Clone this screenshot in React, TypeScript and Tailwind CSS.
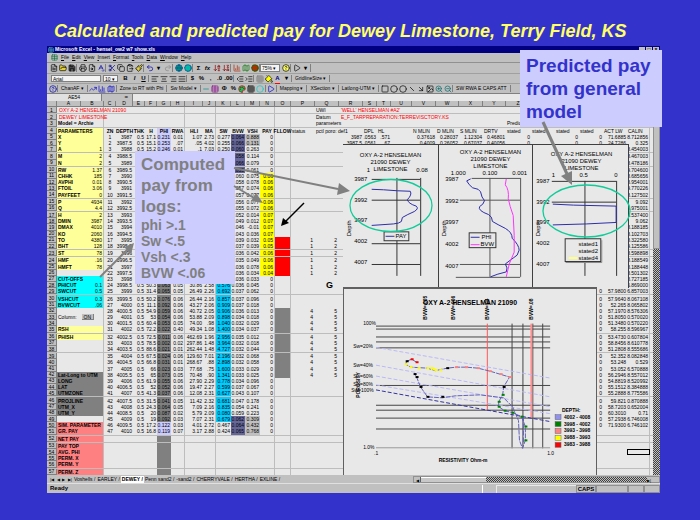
import type { ReactNode } from 'react'
import {
  AlignCenter, AlignJustify, AlignLeft, AlignRight, ArrowDownAZ, ArrowDownZA, ArrowDownRight, BarChart3,
  Circle, ClipboardPaste, Copy, FileText, FolderOpen, Globe, Grid3x3, HelpCircle, Image, Indent, Map as MapIcon,
  Minus, Outdent, Paintbrush, PaintBucket, Palette, Printer, Redo2, Save, Scissors, SpellCheck,
  Square, Table, TrendingUp, Undo2, ZoomIn, ZoomOut, Earth, Play, FileSearch,
} from 'lucide-react'

type Col = { id: string; w: string }

const COLS: Col[] = [
  { id: 'A', w: 'w-[24px]' }, { id: 'B', w: 'w-[23px]' }, { id: 'C', w: 'w-[12px]' }, { id: 'D', w: 'w-[17px]' },
  { id: 'E', w: 'w-[12px]' }, { id: 'F', w: 'w-[12px]' }, { id: 'G', w: 'w-[14px]' }, { id: 'H', w: 'w-[14px]' },
  { id: 'I', w: 'w-[18px]' }, { id: 'J', w: 'w-[13px]' }, { id: 'K', w: 'w-[15px]' }, { id: 'L', w: 'w-[14px]' },
  { id: 'M', w: 'w-[15px]' }, { id: 'N', w: 'w-[15px]' }, { id: 'O', w: 'w-[16px]' }, { id: 'P', w: 'w-[24px]' },
  { id: 'Q', w: 'w-[24px]' }, { id: 'R', w: 'w-[24px]' }, { id: 'S', w: 'w-[14px]' }, { id: 'T', w: 'w-[14px]' },
  { id: 'U', w: 'w-[21px]' }, { id: 'V', w: 'w-[24px]' }, { id: 'W', w: 'w-[23px]' }, { id: 'X', w: 'w-[24px]' },
  { id: 'Y', w: 'w-[23px]' }, { id: 'Z', w: 'w-[25px]' }, { id: 'AA', w: 'w-[24px]' }, { id: 'AB', w: 'w-[24px]' },
  { id: 'AC', w: 'w-[24px]' }, { id: 'AD', w: 'w-[24px]' }, { id: 'AE', w: 'w-[23px]' }, { id: 'AF', w: 'flex-1' },
]

const ROWS = Array.from({ length: 57 }, (_, i) => i + 1)
const RULED = [1, 3, 7, 9, 14, 16, 22, 23, 29, 35, 38, 45, 51, 52, 56]
const LINED = ['H', 'J', 'N', 'O', 'B', 'AE']

const cells: Record<string, string> = {}
const put = (col: string, from: number, list: string) => {
  list.split(' ').forEach((v, i) => {
    if (v !== '_') cells[col + (from + i)] = v
  })
}

const labels = [
  'OXY A-2 HENSELMAN 21090', 'DEWEY LIMESTONE', 'Model = Archie', 'PARAMETERS', 'X', 'Y', 'A', 'M', 'N', 'RW',
  'CHHK', 'AVPHI', 'FTOIL', 'PAYFEET', 'P', 'Q', 'H', 'DMIN', 'DMAX', 'KO', 'TO', 'BHT', 'ST', 'HMF', 'HMFT', '',
  'CUT-OFFS', 'PHICUT', 'SWCUT', 'VSHCUT', 'BVWCUT', '', 'Column:', '', 'RSH', 'PHISH', '', '', '', '', '',
  'Lat-Long to UTM', 'LONG', 'LAT', 'UTMZONE', 'PROJLINE', 'UTM_X', 'UTM_Y', '', 'SIM. PARAMETER', 'GR. PAY',
  'NET PAY', 'PAY TOP', 'AVG. PHI', 'PERM. X', 'PERM. Y', 'PERM. Z',
]
labels.forEach((v, i) => (cells['A' + (i + 1)] = v))

put('B', 7, '1 2 2 1.37 185 0.01 3.06 0 4934 4.4 2 3987 4010 2060 4380 128 78 .16 78')
put('B', 28, '0.1 0.5 0.3 .06')

// well log, one sample every half foot
for (let i = 0; i < 47; i++) {
  const r = 5 + i
  cells['C' + r] = String(i + 1)
  cells['D' + r] = String(3987 + i * 0.5)
  cells['E' + r] = '0.5'
  cells['N' + r] = '0'
}
put('F', 5, '17.1 15.1 15.2')
put('F', 28, '50.3 31.4 50.2 11.1 54.9 53 60.4 72.2 72.5 78.5 88.6 67.5 66.8 66 65 61.9 52 41.3 31.5 24.3 20 19 17.2 16.8')
put('G', 5, '0.231 0.253 0.246')
put('G', 28, '0.063 0.065 0.076 0.092 0.059 0.054 0.053 0.022 0.011 0.002 0.021 0.024 0.031 0.023 0.073 0.055 0.052 0.037 0.041 0.064 0.087 0.092 0.122 0.119')
put('H', 5, '0.01 .07 0.01')
put('H', 28, '0.05 0.05 0.06 0.06 0.06 0.06 0.05 0.40 0.06 0.02 0.01 0.06 0.01 0.03 0.05 0.06 0.06 0.06 0.05 0.05 0.02 0.03 0.03 0.07')
put('I', 5, '1.07 .05 .1')
put('I', 28, '30.86 26.49 26.44 43.27 40.72 53.88 74.00 49.34 462.69 297.86 262.44 129.60 268.67 77.68 70.48 27.90 19.47 12.08 11.42 7.09 5.79 7.07 4.01 3.17')
put('J', 5, '2.73 4.02 7.03')
put('J', 28, '2.58 2.26 2.16 2.06 2.05 2.09 .98 1.08 1.96 1.48 1.48 7.01 .88 .75 .90 2.29 2.27 2.31 2.32 2.16 2.09 2.31 2.72 2.88')
put('K', 5, '0.277 0.255 0.250')
put('K', 28, '0.576 0.692 0.857 0.909 0.906 0.898 1.040 1.400 2.956 3.964 4.727 2.196 2.898 1.600 1.341 0.778 0.599 0.627 0.681 0.835 0.080 0.679 0.467 0.424')
put('L', 5, '0.064 0.066 0.060 0.058 0.066 0.055 0.060 0.058 0.057 0.057 0.056 0.055 0.052 0.049 0.046 0.043 0.039 0.037 0.036 0.035 0.036 0.036 0.036 0.036 0.037 0.037 0.037 0.036 0.034 0.032 0.034 0.035 0.032 0.032 0.032 0.032 0.033 0.033 0.034 0.037 0.043 0.047 0.054 0.059 0.062 0.064 0.065')
put('M', 5, '0.888 0.131 0.263 0.114 0.079 0.061 0.075 0.078 0.074 0.077 0.077 0.072 0.014 0.012 -0.01 0.036 0.032 0.039 0.042 0.049 0.078 0.034 0.033 0.045 0.062 0.096 0.018 0.013 0.018 0.029 0.037 0.012 0.018 0.044 0.068 0.058 0.029 0.025 0.096 0.067 0.107 0.178 0.241 0.223 0.309 0.432 0.768')
put('N', 11, '0.06 0.06 0.06 0.06 0.06 0.06 0.07 0.07 0.07 0.07 0.05 0.05 0.06 0.06 0.06 0.04')
put('P', 21, '1 1 1 1 1 1')
put('Q', 21, '2 2 2 2 2 2')
put('P', 32, '4 4 4 4 4 4 4 4 4 4 4')
put('Q', 32, '5 5 5 5 5 5 5 5 5 5 5')
put('R', 5, '3987 3987.5')
put('S', 5, '.0563 .0561')
put('T', 5, '.571 .67')
put('V', 5, '0.37618 0.4009')
put('W', 5, '0.28037 0.26052')
put('X', 5, '1.12304 0.67037')
put('Y', 5, '0.46801 0.40056')
put('Z', 5, '0 0')
put('AB', 5, '0 0')
put('AC', 5, '0 0')
put('AD', 5, '71.6885 24.7286')
put('AE', 5, '8.712856 0.325 8.454003 8.467003 8.478186 9.704600 8.685656 8.954001 9.770226 8.127502 9.092 8.975001 8.537400 9.062 8.188185 8.102703 8.322580 9.125586 8.598898 8.188549 8.188448 8.501302 8.727185 8.420206')
put('AC', 28, '0 0 0 0 0 0 0 0 0 0 0 0 0 0 0 0 0 0 0 0 0 0 0')
put('AD', 28, '55.5940 57.9800 57.9640 52.265 57.1970 51.8050 51.3480 58.255 53.4730 58.8456 51.2808 52.352 53.248 53.052 56.2946 54.8819 55.1512 55.2888 59.821 58.7203 60.3010 57.2938 71.9300')
put('AE', 28, '6.869000 6.857003 8.067108 8.065802 8.576306 0.570020 0.570220 8.596967 0.607804 8.610778 8.555686 8.082848 0.529 6.570888 8.557012 8.520992 8.384888 8.775586 0.870888 0.652004 0.71 6.746008 6.746102')

Object.assign(cells, {
  C4: 'ZN', D4: 'DEPTH', E4: 'THK', F4: 'H', G4: 'PHI', H4: 'RWA', I4: 'HLI', J4: 'MA', K4: 'SW', L4: 'BVW', M4: 'VSH',
  N4: 'PAY', O4: 'FLLOW', P4: 'status', Q4: 'pctl poro: def1', S4: 'DPL', T4: 'HL', V4: 'N MLIN', W4: 'D MLIN',
  X4: 'S MLIN', Y4: 'DRTV', Z4: 'stated', AA4: 'stated', AB4: 'stated', AC4: 'stated', AD4: 'ACT LW', AE4: 'CALIN',
  Q1: 'UWI', R1: "'WELL'  HENSELMAN #A2'", Q2: 'Datum', R2: 'E_F_TARPREPARATION:TERREVISCTORY.KS',
  Q3: 'parameters', Z3: 'Predicted', Q28: 'G',
})

const within = (n: number, a: number, b: number) => n >= a && n <= b

function fillFor(col: string, r: number) {
  if (col === 'A' || col === 'B') {
    if (within(r, 4, 25) || within(r, 35, 36)) return 'bg-[#ffff99]'
    if (within(r, 27, 31)) return 'bg-[#00ffff]'
    if (within(r, 42, 48)) return 'bg-[#808080]'
    if (r >= 50) return 'bg-[#ff8080]'
  }
  if (col === 'G') {
    if (within(r, 4, 27) || within(r, 50, 51)) return 'bg-[#ccccff]'
    if (r >= 28) return 'bg-[#808080]'
  }
  if (col === 'K' && within(r, 28, 49)) return 'bg-[#00ccff]'
  if (col === 'L' && (within(r, 5, 10) || within(r, 49, 51))) return 'bg-[#666699]'
  if (col === 'M' && (within(r, 5, 6) || within(r, 49, 51))) return 'bg-[#c0c0c0]'
  if (col === 'N' && within(r, 11, 26)) return 'bg-[#ffff00]'
  if (col === 'O' && within(r, 21, 26)) return 'bg-[#ff0000]'
  if (col === 'O' && within(r, 32, 42)) return 'bg-[#808080]'
  return ''
}

function textFor(col: string, r: number) {
  if (r < 3 && (col === 'A' || col === 'R')) return 'relative text-[#ff0000] pl-[2px]'
  if (col === 'A') return r > 2 && r !== 33 ? 'relative font-bold pl-px' : 'relative pl-px'
  if (r === 4 && col === 'D') return 'font-bold justify-end'
  if (r === 4) return within(COLS.findIndex((c) => c.id === col), 2, 14) ? 'font-bold justify-center' : 'pl-px'
  if (r < 4) return 'pl-px'
  if (col === 'C') return 'justify-center'
  if (r === 28 && col === 'Q') return 'relative justify-end pr-[6px] text-[9px] font-bold'
  if (col === 'P' || col === 'Q') return 'justify-end pr-[2px]'
  return 'justify-end pr-px'
}

function Sheet() {
  return (
    <table className="flex flex-1 flex-col overflow-hidden bg-[#e8e8e8] text-[5px] leading-[6px]">
      <thead className="flex">
        <tr className="flex h-[6px] flex-1 border-b border-[#808080] bg-[#c0c0c0]">
          <th className="w-[10px] border-r border-[#808080]" />
          {COLS.map((c) => (
            <th key={c.id} className={`${c.w} shrink-0 overflow-hidden border-r border-[#808080] text-center font-normal leading-[5px]`}>
              {c.id === 'AF' ? '' : c.id}
            </th>
          ))}
        </tr>
      </thead>
      <tbody className="flex flex-1 flex-col">
        {ROWS.map((r) => (
          <tr key={r} className={`flex min-h-[6px] flex-1 basis-0 ${RULED.includes(r) ? 'border-b border-[#bdbdbd]' : ''}`}>
            <th className="flex h-full w-[10px] shrink-0 items-center justify-center border-b border-r border-[#808080] bg-[#c0c0c0] font-normal">
              {r}
            </th>
            {COLS.map((c) => (
              <td
                key={c.id}
                className={`flex h-full shrink-0 items-center whitespace-nowrap ${c.w} ${LINED.includes(c.id) ? 'border-r border-[#bdbdbd]' : ''} ${fillFor(c.id, r)} ${textFor(c.id, r)} ${r === 54 && c.id === 'AE' ? 'border border-black' : ''}`}
              >
                {r === 33 && c.id === 'B' ? (
                  <button className="mr-2 h-full border-b border-r border-[#808080] bg-[#c0c0c0] px-[2px]">ON</button>
                ) : (
                  cells[c.id + r]
                )}
              </td>
            ))}
          </tr>
        ))}
      </tbody>
    </table>
  )
}

function LogLabels({ x, top, step }: { x: number; top: number; step: number }) {
  return (
    <>
      {[3987, 3992, 3997, 4002, 4007].map((d, i) => (
        <text key={d} x={x} y={top + i * step} textAnchor="middle">{d}</text>
      ))}
    </>
  )
}

function ChartTitle({ x, y }: { x: number; y: number }) {
  return (
    <g textAnchor="middle">
      <text x={x} y={y}>OXY A-2 HENSELMAN</text>
      <text x={x} y={y + 7}>21090 DEWEY</text>
      <text x={x} y={y + 14}>LIMESTONE</text>
    </g>
  )
}

function PayChart() {
  return (
    <svg viewBox="343 144 96 144" className="h-[144px] w-[96px] border-r border-t border-[#404040] bg-[#e8e8e8] text-[6px]">
      <ChartTitle x={391} y={156} />
      <text x="367" y="171">1</text>
      <text x="417" y="171">0.08</text>
      <LogLabels x={361} top={180} step={21} />
      <text transform="translate(351 236) rotate(-90)">Depth</text>
      <path d="M372 178.500H421M372 199.500H421M372 243.500H421M372 264.500H421M397.500 177V276M421.500 177V276" stroke="#333" fill="none" />
      <path d="M372 188.500L384 189L398 190L411 190.500Q413 194 408 199Q409 203 417 205.500Q420 208 415 211Q408 214 403 217L402 221Q400 223 394 223.500L372 225" stroke="#2c2ca8" fill="none" />
      <rect x="384.500" y="231.500" width="25" height="9" fill="#e8e8e8" stroke="#333" />
      <path d="M386 236H395" stroke="#2c2ca8" />
      <text x="396" y="238">PAY</text>
    </svg>
  )
}

function PorosityChart() {
  return (
    <svg viewBox="439 144 94 144" className="h-[144px] w-[94px] border-r border-t border-[#404040] bg-[#e8e8e8] text-[6px]">
      <ChartTitle x={491} y={153} />
      <text x="451" y="174">1.000</text>
      <text x="483" y="174">0.100</text>
      <text x="513" y="174">0.001</text>
      <LogLabels x={452} top={180} step={22} />
      <text transform="translate(446 236) rotate(-90)">Depth</text>
      <path d="M472 177.500H521M460 199.500H521M460 264.500H521M456 277.500H521M490.500 177V277M521.500 177V277" stroke="#555" fill="none" />
      <path d="M471 178L467 180Q469 184 473 187Q480 188 481 191Q482 197 485 200Q484 204 480 206Q478 210 489 214Q493 216 493 221Q498 224 506 228Q513 232 513 238Q520 245 520 250Q519 256 514 258L506 264Q509 268 507 272Q498 274 491 277" stroke="#2c2ca8" fill="none" />
      <path d="M507 178L506 184Q510 189 509 198L511 206L514 215L515 235L515 252L510 264L507 277" stroke="#ff33ff" fill="none" />
      <rect x="469.500" y="232.500" width="27" height="15" fill="#e8e8e8" stroke="#333" />
      <path d="M471 237H480" stroke="#2c2ca8" />
      <path d="M471 244.500H480" stroke="#ff33ff" />
      <text x="482" y="239">PHI</text>
      <text x="481" y="246">BVW</text>
    </svg>
  )
}

function StatedChart() {
  return (
    <svg viewBox="533 144 96 144" className="h-[144px] w-[96px] border-r border-t border-[#404040] bg-[#e8e8e8] text-[6px]">
      <ChartTitle x={582} y={155} />
      <text x="552" y="176">1</text>
      <text x="580" y="176">0.5</text>
      <text x="615" y="176">0</text>
      <LogLabels x={543} top={182} step={21} />
      <text transform="translate(540 236) rotate(-90)">Depth</text>
      <path d="M552 180.500H617M552 201.500H617M585.500 180V276M617.500 180V276" stroke="#333" fill="none" />
      <path d="M553 203.500L574 204.500L617 205.500V222L587 223.500L553 224.500" stroke="#2c2ca8" fill="none" />
      <rect x="565.500" y="238.500" width="36" height="23" fill="#e8e8e8" stroke="#333" />
      <path d="M566 262.500H602.500V240" stroke="#888" fill="none" />
      <path d="M569 258H578" stroke="#ffff80" strokeWidth="2" />
      <text x="579" y="246">stated1</text>
      <text x="579" y="253">stated2</text>
      <text x="579" y="260">stated4</text>
    </svg>
  )
}

const POINTS: [string, number[][]][] = [
  ['#000', [[406, 360], [447, 367], [504, 386], [442, 396], [427, 396], [420, 386], [416, 376], [414, 373]]],
  ['#ff0000', [[411, 358], [416, 361]]],
  ['#ffff00', [[405, 363], [410, 366], [418, 367], [427, 367], [431, 367], [433, 368], [435, 369], [440, 369]]],
  ['#ff8080', [[456, 366], [466, 366], [478, 367], [490, 370], [501, 373], [510, 376]]],
  ['#008000', [[503, 394], [499, 401], [499, 406], [505, 410], [513, 412], [522, 416], [526, 426], [526, 440]]],
]

const DEPTHS = [
  ['#9090f0', '4002 - 4008'],
  ['#008000', '3998 - 4002'],
  ['#ff8080', '3993 - 3998'],
  ['#ffff00', '3988 - 3993'],
  ['#ff0000', '3983 - 3988'],
]

function PickettPlot() {
  return (
    <svg viewBox="343 287 254 188" className="h-[188px] w-[254px] border-l border-r border-t-2 border-[#606060] bg-[#e8e8e8] text-[5px]">
      {[425, 453, 487, 532].map((x, i) => (
        <text key={x} transform={`translate(${x + 2} 318) rotate(-90)`} className="font-bold">
          {['BVW=.005', 'BVW=.006', 'BVW=.04', 'BVW=.08'][i]}
        </text>
      ))}
      <text x="470" y="303" textAnchor="middle" className="text-[7px] font-bold">OXY A-2 HENSELMAN 21090</text>
      <path d="M375 324.500H551M375 327.500H551M375 335.500H551M375 340.500H551M375 346.500H551M375 384.500H551M375 404.500H551M375 409.500H551M375 417.500H551M375 428.500H551" stroke="#444" />
      <path d="M512.500 322V448M523.500 322V448M533.500 322V448M543.500 322V448" stroke="#444" />
      <path d="M375 447.500H551" stroke="#999" />
      <path d="M487.500 322V409" stroke="#ff5555" />
      <path d="M532 322V417" stroke="#ff9090" strokeWidth="2" />
      <path d="M375 346L551 377M375 364L551 396M375 375L551 406M375 384L551 413" stroke="#b8b8f8" strokeDasharray="4 2" />
      <path d="M375 389L551 421" stroke="#3030a0" strokeDasharray="4 2" />
      <path
        d="M416 361L411 358L406 360L405 363L410 366L427 367L435 369.500L447 367L456 366L466 366L478 367L490 370L510 376L504 386L503 394L499 401V406L505 410L513 412L522 416L526 426V440L523 448L520 440L519 420L513 406L504 397L480 394L455 395L442 397L427 396L420 386L416 376L414 373"
        stroke="#6060b8" strokeDasharray="5 1" fill="none"
      />
      <path d="M524 416V444" stroke="#6060c0" strokeDasharray="5 2" />
      {POINTS.map(([color, list]) =>
        list.map(([x, y]) => <rect key={`${x}-${y}`} x={x - 1} y={y - 1} width="3" height="2" fill={color} />)
      )}
      <text x="362" y="323">100%</text>
      <text x="352" y="347">Sw=20%</text>
      <text x="352" y="366">Sw=40%</text>
      <text x="352" y="377">Sw=60%</text>
      <text x="352" y="385">Sw=80%</text>
      <text x="350" y="391">Sw=100%</text>
      <text transform="translate(359 397) rotate(-90)" className="font-bold">POROSITY</text>
      <text x="362" y="449">1.0%</text>
      <text x="373" y="455">.1</text>
      <text x="548" y="455">1.0</text>
      <text x="463" y="462" textAnchor="middle" className="font-bold">RESISTIVITY Ohm-m</text>
      <text x="563" y="411" className="font-bold">DEPTH:</text>
      {DEPTHS.map(([color, label], i) => (
        <g key={label}>
          <rect x="556" y={414 + i * 7} width="6" height="5" fill={color} stroke="#666" strokeWidth="0.500" />
          <text x="565" y={418 + i * 7} className="font-bold">{label}</text>
        </g>
      ))}
    </svg>
  )
}

function Tool({ children, label }: { children: ReactNode; label: string }) {
  return (
    <button aria-label={label} className="flex w-[9px] items-center justify-center text-[6px] font-bold [&>svg]:size-[8px] [&>svg]:stroke-2">
      {children}
    </button>
  )
}

function Group({ children }: { children: ReactNode }) {
  return <div className="flex items-center border-r border-[#808080] pl-px">{children}</div>
}

function TextTool({ children }: { children: ReactNode }) {
  return <button className="border-r border-[#808080] px-[3px] text-[5px]">{children}</button>
}

function Toolbars() {
  return (
    <div className="text-[6px]">
      <nav className="flex h-[10px] items-center gap-[3px] border-b border-[#909090] pl-1 text-[5px]">
        <Table className="size-[7px] text-[#006633]" />
        {['File', 'Edit', 'View', 'Insert', 'Format', 'Tools', 'Data', 'Window', 'Help'].map((m) => (
          <button key={m}><span className="underline">{m[0]}</span>{m.slice(1)}</button>
        ))}
      </nav>
      <div className="flex h-[10px] py-px pl-px">
        <Group>
          <Tool label="New"><FileText /></Tool>
          <Tool label="Open"><FolderOpen fill="#e0d040" /></Tool>
          <Tool label="Save"><Save fill="#555" /></Tool>
        </Group>
        <Group>
          <Tool label="Print"><Printer /></Tool>
          <Tool label="Preview"><FileSearch /></Tool>
          <Tool label="Spelling"><SpellCheck color="#0000aa" /></Tool>
        </Group>
        <Group>
          <Tool label="Cut"><Scissors color="#000080" /></Tool>
          <Tool label="Copy"><Copy /></Tool>
          <Tool label="Paste"><ClipboardPaste /></Tool>
          <Tool label="Format painter"><Paintbrush fill="#e0d040" /></Tool>
        </Group>
        <Group>
          <Tool label="Undo"><Undo2 color="#0000aa" /></Tool>
          <Tool label="Undo list">▾</Tool>
          <Tool label="Redo"><Redo2 color="#888" /></Tool>
        </Group>
        <Group>
          <Tool label="Hyperlink"><Globe color="#004488" fill="#00aa88" /></Tool>
          <Tool label="Web"><Earth color="#004488" fill="#00bbaa" /></Tool>
        </Group>
        <Group>
          <Tool label="Sum">Σ</Tool>
          <Tool label="Function"><i>fx</i></Tool>
          <Tool label="Sort ascending"><ArrowDownAZ color="#880000" /></Tool>
          <Tool label="Sort descending"><ArrowDownZA color="#880000" /></Tool>
        </Group>
        <Group>
          <Tool label="Chart"><BarChart3 color="#aa2200" /></Tool>
          <Tool label="Map"><MapIcon color="#007700" /></Tool>
          <Tool label="Drawing"><Earth color="#006600" fill="#aa3300" /></Tool>
        </Group>
        <select aria-label="Zoom" className="w-[20px] appearance-none border border-[#808080] bg-[#f4f4f4] pl-px text-[5px]"><option>75% ▾</option></select>
        <Group><Tool label="Help"><HelpCircle fill="#ffff66" /></Tool></Group>
        <Group>
          <Tool label="Trace"><Play /></Tool>
          <Tool label="More">▾</Tool>
        </Group>
      </div>
      <div className="flex h-[10px] border-t border-[#a0a0a0] py-px">
        <select aria-label="Font" className="ml-1 w-[50px] appearance-none border border-[#808080] bg-[#f4f4f4] pl-px text-[5px]"><option>Arial</option></select>
        <select aria-label="Font size" className="mx-[2px] w-[15px] appearance-none border border-[#808080] bg-[#f4f4f4] pl-px text-[5px]"><option>10 ▾</option></select>
        <Group>
          <Tool label="Bold">B</Tool>
          <Tool label="Italic"><i>I</i></Tool>
          <Tool label="Underline"><u>U</u></Tool>
        </Group>
        <Group>
          <Tool label="Left"><AlignLeft /></Tool>
          <Tool label="Center"><AlignCenter /></Tool>
          <Tool label="Right"><AlignRight /></Tool>
          <Tool label="Merge"><AlignJustify /></Tool>
        </Group>
        <Group>
          <Tool label="Currency">$</Tool>
          <Tool label="Percent">%</Tool>
          <Tool label="Comma">,</Tool>
          <Tool label="Increase decimal">.0</Tool>
          <Tool label="Decrease decimal">.00</Tool>
        </Group>
        <Group>
          <Tool label="Outdent"><Outdent /></Tool>
          <Tool label="Indent"><Indent /></Tool>
        </Group>
        <Group>
          <Tool label="Borders"><Grid3x3 color="#777" /></Tool>
          <Tool label="Fill color"><PaintBucket fill="#ffff00" /></Tool>
          <Tool label="Font color"><span className="border-b border-[#ff0000] text-[#000080]">A</span></Tool>
          <Tool label="Color list">▾</Tool>
        </Group>
        <TextTool>GridlineSize ▾</TextTool>
      </div>
      <div className="flex h-[10px] border-t border-[#a0a0a0] py-px">
        <Group><Tool label="Assistant"><HelpCircle color="#0000aa" /></Tool></Group>
        <TextTool>ChanAF ▾</TextTool>
        <Group>
          <Tool label="Plot"><TrendingUp color="#0000cc" /></Tool>
          <Tool label="Bars"><BarChart3 color="#0000cc" /></Tool>
          <Tool label="Wells"><MapIcon color="#0000cc" /></Tool>
        </Group>
        <TextTool>Zone to RT with Phi</TextTool>
        <TextTool>Sw Model ▾</TextTool>
        <Group>
          <Tool label="Log"><Minus color="#008888" /></Tool>
          <Tool label="Table"><Table color="#880088" /></Tool>
          <Tool label="Phi">Φ</Tool>
          <Tool label="Ratio">%</Tool>
          <Tool label="Palette"><Palette color="#cc0000" fill="#00cc66" /></Tool>
          <Tool label="Hatch"><Grid3x3 /></Tool>
          <Tool label="Mark"><Circle color="#00cccc" /></Tool>
        </Group>
        <Group><Tool label="Run"><Play color="#0000cc" /></Tool></Group>
        <TextTool>Mapping ▾</TextTool>
        <TextTool>XSection ▾</TextTool>
        <TextTool>Latlong-UTM ▾</TextTool>
        <Group>
          <Tool label="Box"><Square /></Tool>
          <Tool label="Gear"><Circle /></Tool>
          <Tool label="Oval"><Circle /></Tool>
          <Tool label="Line"><Minus className="rotate-45" /></Tool>
          <Tool label="Arrow"><ArrowDownRight /></Tool>
          <Tool label="Picture"><Image /></Tool>
          <Tool label="Zoom in"><ZoomIn color="#006666" /></Tool>
          <Tool label="Zoom out"><ZoomOut color="#006666" /></Tool>
        </Group>
        <TextTool>SW RWA E CAPS ATT</TextTool>
      </div>
      <div className="flex h-[8px] border-t border-[#808080] bg-[#e8e8e8]">
        <input aria-label="Name box" defaultValue="AE54" className="w-[55px] border-r border-[#808080] bg-[#e0e0e0] text-center text-[5px]" />
        <div className="flex w-[31px] items-center justify-end border-r border-[#808080] bg-[#c0c0c0] pr-1">=</div>
        <input aria-label="Formula" className="min-w-0 flex-1" />
      </div>
    </div>
  )
}

function Marks() {
  return (
    <svg viewBox="0 0 700 520" className="pointer-events-none absolute left-0 top-0 h-[520px] w-[700px]">
      <g stroke="#808080" strokeWidth="2" fill="#808080">
        <path d="M100 277L128 249" />
        <path d="M134 243L131 254L124 247Z" stroke="none" />
        <path d="M234 168L338 189" />
        <path d="M350 191L337 195L339 183Z" stroke="none" />
        <path d="M234 186L254 198" />
        <path d="M263 203L251 201L256 193Z" stroke="none" />
        <path d="M543 122L567 174" strokeWidth="3" />
        <path d="M572 185L561 176L572 171Z" stroke="none" />
      </g>
      <path d="M304 203L285 222" stroke="#000" strokeWidth="1.500" />
      <path d="M281 226L283 218L289 223Z" />
      <g fill="none" stroke="#10cc99" strokeWidth="1.300">
        <ellipse cx="391" cy="205.500" rx="41" ry="26" />
        <ellipse cx="586.500" cy="211" rx="43.500" ry="26" />
      </g>
    </svg>
  )
}

const DITHER = 'bg-[repeating-conic-gradient(#404040_0_25%,#c0c0c0_0_50%)] bg-[length:2px_2px]'

export default function App() {
  return (
    <main className="relative flex min-h-screen flex-col overflow-hidden bg-[#3333cc] pb-[27px] pl-[47px] pr-[40px] font-['Liberation_Sans',Arial,sans-serif] text-black">
      <h1 className="h-[46px] whitespace-nowrap pl-[7px] pt-[20px] text-[18px] font-bold italic leading-[22px] text-[#ffff66]">
        Calculated and predicted pay for Dewey Limestone, Terry Field, KS
      </h1>

      <section className="flex flex-1 flex-col bg-[#c0c0c0]">
        <header className="flex h-[7px] items-center bg-[#000080] text-[5px] font-bold leading-[7px] text-white">
          <Table className="mx-px size-[6px] text-[#66ddcc]" />
          <span className="flex-1">Microsoft Excel - hensel_ow2 w7 show.xls</span>
          {['_', '□', '×'].map((s) => (
            <button key={s} className="mr-px h-[6px] w-[6px] bg-[#c0c0c0] text-[5px] leading-[5px] text-black">{s}</button>
          ))}
        </header>
        <Toolbars />
        <div className="flex flex-1">
          <Sheet />
          <div className={`w-[7px] pt-[7px] ${DITHER}`}>
            <div className="h-[141px] border border-[#909090] bg-[#c0c0c0]" />
          </div>
        </div>
        <div className="flex h-[8px] items-center text-[5px] leading-[7px]">
          <div className="flex w-[26px] justify-around pl-[2px] text-[4px]">
            <button>|◀</button><button>◀</button><button>▶</button><button>▶|</button>
          </div>
          {['Voshells', 'EARLEY', 'DEWEY', 'Penn sand2', '-sand2', 'CHERRYVALE', 'HERTHA', 'EXLINE'].map((t) => (
            <button key={t} className={t === 'DEWEY' ? 'bg-white px-px font-bold' : 'px-px'}>{t} /</button>
          ))}
          <div className="ml-auto flex h-[7px] w-[247px] border border-[#909090]">
            <button className="w-[7px] border-r border-[#606060] text-[4px]">◀</button>
            <div className="w-[65px] border-t border-white bg-[#c8c8c8]" />
            <div className={`flex-1 ${DITHER}`} />
            <button className="w-[12px] text-left text-[4px]">▶|</button>
          </div>
        </div>
        <footer className="flex h-[10px] items-center border-t border-[#e0e0e0] pl-[3px] text-[6px] font-bold">
          <span className="flex-1">Ready</span>
          <span className="h-[8px] w-[14px] border-l border-white" />
          <span className="h-[8px] w-[80px] border-l border-t border-[#e8e8e8]" />
          <span className="h-[8px] w-[20px] border border-[#909090] text-center leading-[7px]">CAPS</span>
          <span className="h-[8px] w-[32px] border border-[#909090]" />
          <span className="h-[8px] w-[16px] border border-[#909090]" />
          <span className="h-[8px] w-[16px] border border-[#909090]" />
        </footer>
      </section>

      {/* chart windows floating over the sheet */}
      <div className="absolute left-[343px] top-[144px] flex">
        <PayChart />
        <PorosityChart />
        <StatedChart />
      </div>
      <div className="absolute left-[343px] top-[287px]">
        <PickettPlot />
      </div>

      {/* callouts */}
      <div className="absolute left-[520px] top-[50px] w-[142px] whitespace-nowrap bg-[#ccccff] px-[6px] py-[4px] text-[19px] font-bold leading-[23px] text-[#3333cc]">
        Predicted pay<br />from general<br />model
      </div>
      <div className="absolute left-[135px] top-[151px] w-[100px] whitespace-nowrap bg-[#ccccff] px-[6px] py-[3px] font-bold text-[#808080]">
        <p className="text-[17px] leading-[21px]">Computed<br />pay from<br />logs:</p>
        <p className="text-[14px] leading-[16px]">phi &gt;.1<br />Sw &lt;.5<br />Vsh &lt;.3<br />BVW &lt;.06</p>
      </div>
      <Marks />
    </main>
  )
}
